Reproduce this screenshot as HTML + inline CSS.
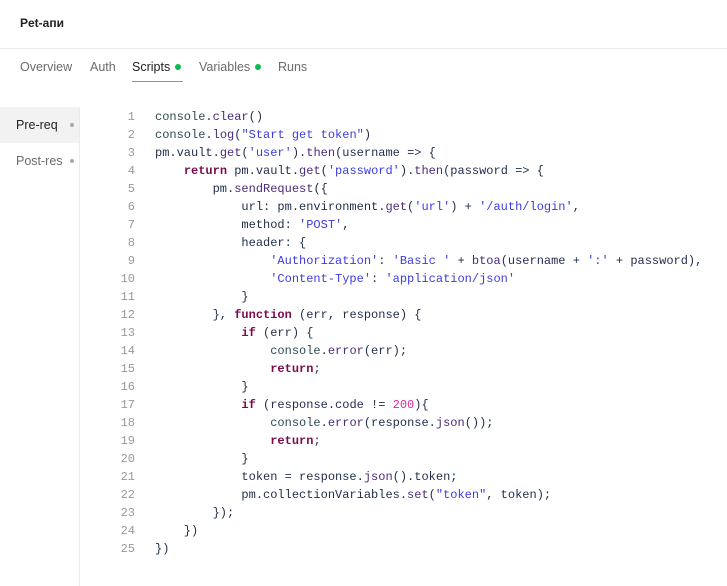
<!DOCTYPE html>
<html><head><meta charset="utf-8"><style>
*{margin:0;padding:0;box-sizing:border-box}
body{width:727px;height:586px;background:#fff;font-family:"Liberation Sans",sans-serif;overflow:hidden;position:relative;color:#212121}
.title{position:absolute;left:20px;top:16px;font-size:12px;font-weight:bold;color:#212121}
.hb{position:absolute;left:0;top:48px;width:727px;height:1px;background:#ebebeb}
.tabs{position:absolute;top:60px;left:20px;font-size:12.5px;color:#6b6b6b}
.tabs span{position:absolute;white-space:nowrap}
.dot{display:inline-block;width:6px;height:6px;border-radius:50%;background:#0cbb52;margin-left:5px;vertical-align:1px}
.ul{position:absolute;left:132px;top:81px;width:51px;height:1px;background:#ff6c37}
.side{position:absolute;left:0;top:107px;width:80px;height:479px;border-right:1px solid #ebebeb}
.si{height:36px;line-height:36px;padding-left:16px;font-size:12.5px;color:#6b6b6b;position:relative}
.si.a{background:#f2f2f2;color:#212121}
.si i{position:absolute;left:70px;top:16px;width:4px;height:4px;border-radius:50%;background:#aaa}
pre{position:absolute;top:108px;font-family:"Liberation Mono",monospace;font-size:12px;line-height:18px}
.ln{left:100px;width:35px;text-align:right;color:#999}
.code{left:155px;color:#1f2d4a}
.c{color:#2d4b53}.m{color:#4b2b7a}.k{color:#7b0b4c;font-weight:bold}.s{color:#3c3ce0}.n{color:#e0279b}
</style></head><body>
<div class="title">Pet-апи</div>
<div class="hb"></div>
<div class="tabs">
<span style="left:0">Overview</span>
<span style="left:70px">Auth</span>
<span style="left:112px;color:#212121">Scripts<i class="dot"></i></span>
<span style="left:179px">Variables<i class="dot"></i></span>
<span style="left:258px">Runs</span>
</div>
<div class="ul"></div>
<div class="side"><div class="si a">Pre-req<i></i></div><div class="si">Post-res<i></i></div></div>
<pre class="ln">1
2
3
4
5
6
7
8
9
10
11
12
13
14
15
16
17
18
19
20
21
22
23
24
25</pre>
<pre class="code"><span class="c">console</span>.<span class="m">clear</span>()
<span class="c">console</span>.<span class="m">log</span>(<span class="s">"Start get token"</span>)
pm.vault.<span class="m">get</span>(<span class="s">'user'</span>).<span class="m">then</span>(username =&gt; {
    <span class="k">return</span> pm.vault.<span class="m">get</span>(<span class="s">'password'</span>).<span class="m">then</span>(password =&gt; {
        pm.<span class="m">sendRequest</span>({
            url: pm.environment.<span class="m">get</span>(<span class="s">'url'</span>) + <span class="s">'/auth/login'</span>,
            method: <span class="s">'POST'</span>,
            header: {
                <span class="s">'Authorization'</span>: <span class="s">'Basic '</span> + <span class="m">btoa</span>(username + <span class="s">':'</span> + password),
                <span class="s">'Content-Type'</span>: <span class="s">'application/json'</span>
            }
        }, <span class="k">function</span> (err, response) {
            <span class="k">if</span> (err) {
                <span class="c">console</span>.<span class="m">error</span>(err);
                <span class="k">return</span>;
            }
            <span class="k">if</span> (response.code != <span class="n">200</span>){
                <span class="c">console</span>.<span class="m">error</span>(response.<span class="m">json</span>());
                <span class="k">return</span>;
            }
            token = response.<span class="m">json</span>().token;
            pm.collectionVariables.<span class="m">set</span>(<span class="s">"token"</span>, token);
        });
    })
})</pre>
</body></html>
